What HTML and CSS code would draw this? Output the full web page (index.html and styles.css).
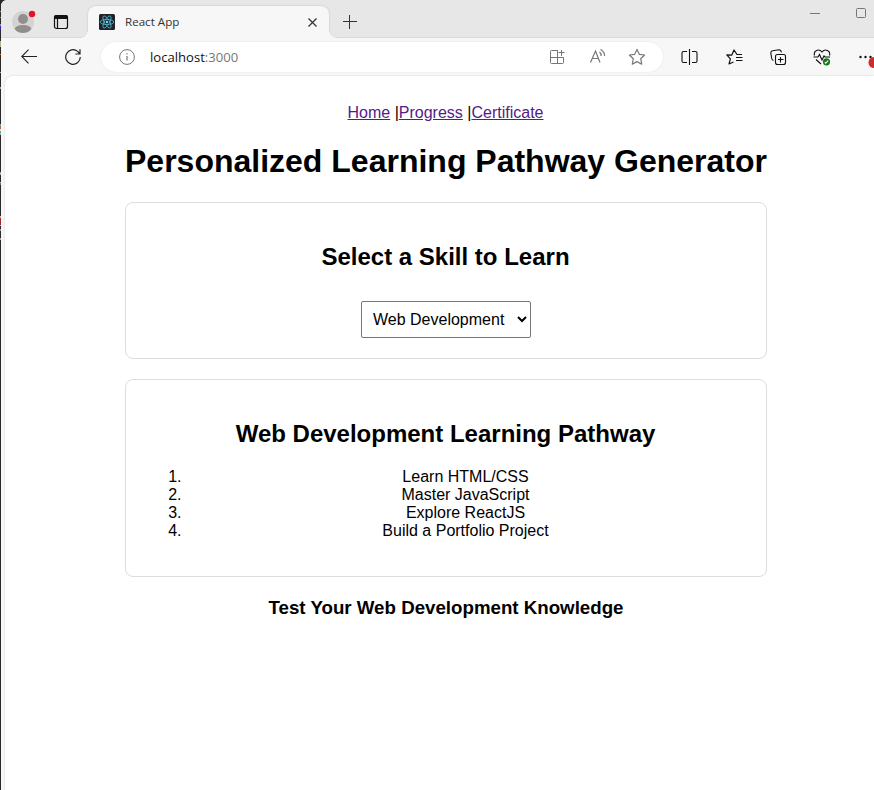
FILE: index.html
```html
<!DOCTYPE html>
<html lang="en">
<head>
<meta charset="utf-8">
<title>React App</title>
<link rel="stylesheet" href="styles.css">
</head>
<body>
<div class="window">
  <header class="tabs">
    <svg class="avatar" width="24" height="24" viewBox="0 0 24 24"><defs><clipPath id="face"><circle cx="11" cy="12" r="11"/></clipPath></defs><circle cx="11" cy="12" r="11" fill="#d5d3d1"/><g clip-path="url(#face)" fill="#918f8d"><circle cx="11" cy="9" r="5"/><ellipse cx="11" cy="19.500" rx="8.500" ry="4.500"/></g><circle cx="20" cy="4" r="3.2" fill="#e81123"/></svg>
    <svg class="tabmenu" width="16" height="16" viewBox="0 0 16 16"><rect x="1.5" y="1.5" width="13" height="13" rx="2" fill="none" stroke="#111" stroke-width="1.2"/><path d="M1 5V3a2 2 0 0 1 2-2h10a2 2 0 0 1 2 2v2z" fill="#111"/><path d="M4.5 5v9.5" stroke="#111" stroke-width="1.2"/></svg>
    <div class="tab">
      <svg class="favicon" width="16" height="16" viewBox="0 0 16 16"><rect width="16" height="16" rx="1.5" fill="#20232a"/><g fill="none" stroke="#53b9d3" stroke-width=".8"><ellipse cx="8" cy="8" rx="6.8" ry="2.6"/><ellipse cx="8" cy="8" rx="6.8" ry="2.6" transform="rotate(60 8 8)"/><ellipse cx="8" cy="8" rx="6.8" ry="2.6" transform="rotate(120 8 8)"/></g><circle cx="8" cy="8" r="1.3" fill="#61dafb"/></svg>
      <span class="tabname">React App</span>
      <svg class="close" width="9" height="9" viewBox="0 0 9 9" stroke="#333" stroke-width="1.2"><path d="M.5 .5l8 8M8.5 .5l-8 8"/></svg>
    </div>
    <svg class="newtab" width="14" height="14" viewBox="0 0 14 14" stroke="#333" stroke-width="1"><path d="M0 6.5h14M6.5 0v14"/></svg>
    <svg class="minimize" width="10" height="10" viewBox="0 0 10 10" stroke="#777"><path d="M0 5.5h10"/></svg>
    <svg class="maximize" width="10" height="10" viewBox="0 0 10 10" fill="none" stroke="#777"><rect x=".5" y=".5" width="9" height="9" rx="1"/></svg>
  </header>
  <div class="toolbar">
    <svg class="back" width="16" height="16" viewBox="0 0 16 16" fill="none" stroke="#222" stroke-width="1.1"><path d="M16 7.500H.8M7.500 .7L.8 7.500l6.700 6.800"/></svg>
    <svg class="reload" width="16" height="16" viewBox="0 0 16 16" fill="none" stroke="#222" stroke-width="1.2"><path d="M15.3 8A7.3 7.3 0 1 1 12.7 2.4L15 5M15 .3V5h-4.6"/></svg>
    <div class="address">
      <svg class="info" width="16" height="16" viewBox="0 0 16 16" fill="none" stroke="#777"><circle cx="8" cy="8" r="7.4"/><path d="M8 7v4.5M8 4.2v1.3" stroke-width="1.2"/></svg>
      <span class="url">localhost<span class="port">:3000</span></span>
      <svg width="16" height="16" viewBox="0 0 16 16" class="apps" fill="none" stroke="#777"><path d="M9 1.500H2.500a1 1 0 0 0-1 1v11a1 1 0 0 0 1 1h11a1 1 0 0 0 1-1V8.500H1.500M8.500 1v13.500M12.500 1v6M9.500 3.500h6"/></svg>
      <svg width="18" height="16" viewBox="0 0 18 16" class="read" fill="none" stroke="#777" stroke-width="1.200"><path d="M1.500 14.500L6.500 3l4.500 11.500M3 10.500h6.500M10.500 4q2 1.500 1.500 4M11.500 1.500q4.500 2.500 4 6.500"/></svg>
      <svg width="18" height="18" viewBox="0 0 18 18" class="star" fill="none" stroke="#777" stroke-width="1.200"><path d="M9 1.400l2.300 4.900 5.300.7-3.900 3.700 1 5.500L9 13.600l-4.700 2.600 1-5.500L1.400 7l5.300-.7z" stroke-linejoin="round"/></svg>
    </div>
    <svg class="split" width="17" height="16" viewBox="0 0 17 16" fill="none" stroke="#111" stroke-width="1.1"><path d="M6 2.500H2.500a1.500 1.500 0 0 0-1.500 1.500v8a1.500 1.500 0 0 0 1.500 1.500H6M11 2.500h3.500A1.500 1.500 0 0 1 16 4v8a1.500 1.500 0 0 1-1.500 1.500H11M8.500 0v16"/></svg>
    <svg class="favs" width="17" height="17" viewBox="0 0 17 17" fill="none" stroke="#111" stroke-width="1.200" stroke-linejoin="round"><path d="M16 5.500h-5L8 1 5.800 6.100.8 5.800l3.600 4-1.400 5.200 4.500-2M10 8.500h6.500M10 11.500h6.500"/></svg>
    <svg class="collect" width="17" height="17" viewBox="0 0 17 17" fill="none" stroke="#111" stroke-width="1.1"><rect x="5.500" y="5.500" width="10" height="10" rx="2"/><path d="M10.500 8v5.500M8 10.500h5.500M3.500 11.500Q2 11 1.700 9.500L.8 4Q.8 2 2.500 1.800L9 .8q2 0 2.400 2.500"/></svg>
    <svg class="health" width="18" height="18" viewBox="0 0 18 18" fill="none" stroke="#111" stroke-width="1.1"><path d="M1.500 6.500C0 1.500 6-.8 9 3c3-3.800 9-1.500 7.500 3.500M.5 8h4.500l1.500-2.500L9 11l2-4 1 1h5M3 10.500l5 4.500"/><circle cx="13.500" cy="12.800" r="3.600" fill="#107c10" stroke="none"/><path d="M11.800 13.200l1 1 2.400-2.600" stroke="#fff"/></svg>
    <svg class="more" width="15" height="18" viewBox="0 0 15 18"><g fill="#111"><circle cx="1.500" cy="6" r="1.200"/><circle cx="6.500" cy="6" r="1.200"/><circle cx="11.500" cy="6" r="1.200"/></g><circle cx="15" cy="11.500" r="5.500" fill="#d02b2b"/></svg>
  </div>
  <main class="page">
    <div class="app">
      <nav><a href="#">Home</a> |<a href="#">Progress</a> |<a href="#">Certificate</a></nav>
      <h1>Personalized Learning Pathway Generator</h1>
      <section class="card">
        <h2>Select a Skill to Learn</h2>
        <select><option>Web Development</option></select>
      </section>
      <section class="card">
        <h2>Web Development Learning Pathway</h2>
        <ol><li>Learn HTML/CSS</li><li>Master JavaScript</li><li>Explore ReactJS</li><li>Build a Portfolio Project</li></ol>
      </section>
      <h3>Test Your Web Development Knowledge</h3>
    </div>
  </main>
</div>
</body>
</html>
```
FILE: styles.css
```css
* { box-sizing: border-box; }
/* sliver of the editor behind the window's left edge */
body {
  margin: 0;
  overflow: hidden;
  background: linear-gradient(#2b2829 11px, #6c93a8 11px 12px, #2b2829 12px 17px, #b87a45 17px 18px, #2b2829 18px 24px, #8f8fa0 24px 26px, #3a20c0 26px 30px, #2b2829 30px 41px, #b5b08a 41px 47px, #2b2829 47px 54px, #c77b30 54px 55px, #2b2829 55px 72px, #aaa 72px 73px, #2b2829 73px 87px, #aaa 87px 89px, #2b2829 89px 124px, #7aa0c0 124px 126px, #b07030 126px 129px, #ddd 129px 131px, #4fa8dc 131px 133px, #c9a880 133px 135px, #2b2829 135px 172px, #d09a50 172px 173px, #8cc0e0 173px 175px, #2b2829 175px 182px, #8cc0e0 182px 183px, #a06040 183px 185px, #2b2829 185px 216px, #bbb 216px 218px, #a02830 218px 225px, #bbb 225px 226px, #2b2829 226px 229px, #999 229px 231px, #2b2829 231px 238px, #aaa 238px 240px, #2b2829 240px);
}
svg { display: block; flex: none; }
.window { margin-left: 1px; height: 790px; background: #f7f7f7; border-top-left-radius: 6px; overflow: hidden; }
.tabs { display: flex; height: 38px; background: #e7e7e7; border-bottom: 1px solid #dadada; }
.avatar { margin: 10px 0 0 11px; }
.tabmenu { margin: 14px 0 0 17px; }
.tab { position: relative; display: flex; width: 241px; height: 32px; margin: 6px 0 0 19px; background: #f7f7f7; border-radius: 8px 8px 0 0; box-shadow: 0 0 2px #bbb; clip-path: inset(-3px -8px 0 -8px); }
.tab::before, .tab::after { content: ""; position: absolute; bottom: 0; width: 8px; height: 8px; }
.tab::before { left: -8px; background: radial-gradient(circle at 0 0, #e7e7e7 7px, #d5d5d5 7.5px, #f7f7f7 8px); }
.tab::after { right: -8px; background: radial-gradient(circle at 100% 0, #e7e7e7 7px, #d5d5d5 7.5px, #f7f7f7 8px); }
.favicon { margin: 8px 0 0 11px; }
.tabname { margin: 7px 0 0 10px; font: 11.6px/18px "Open Sans", "Noto Sans", sans-serif; color: #333; white-space: nowrap; }
.close { margin: 12px 12px 0 auto; }
.newtab { margin: 15px 0 0 14px; }
.minimize { margin: 8px 0 0 auto; }
.maximize { margin: 8px 8px 0 36px; }
.toolbar { display: flex; height: 38px; }
.back { margin: 11px 0 0 20px; }
.reload { margin: 11px 0 0 28px; }
.address { display: flex; width: 562px; height: 30px; margin: 4px 0 0 20px; background: #fff; border-radius: 15px; box-shadow: 0 0 2px #e0e0e0; }
.info { margin: 7px 0 0 18px; }
.url { margin: 5px 0 0 15px; font: 13.1px/20px "Open Sans", "Noto Sans", sans-serif; color: #111; }
.port { color: #777; }
.apps { margin: 7px 0 0 auto; }
.read { margin: 6px 0 0 24px; }
.star { margin: 6px 17px 0 21px; }
.split { margin: 11px 0 0 18px; }
.favs { margin: 11px 0 0 28px; }
.collect { margin: 11px 0 0 27px; }
.health { margin: 11px 0 0 26px; }
.more { margin: 13px 0 0 auto; }
.page { height: 714px; margin-left: 4px; background: #fff; border-radius: 8px 0 0; box-shadow: 0 0 2px #ccc; font: 16px/18px "Liberation Sans", Arial, sans-serif; color: #000; text-align: center; overflow: hidden; }
.app { width: 641px; margin: 28px 0 0 120px; }
nav a { color: #551a8b; }
h1 { margin: 21px 0 22px; font-size: 32px; line-height: 37px; white-space: nowrap; }
.card { width: 642px; padding: 20px 21px 20px 20px; margin-bottom: 20px; border: 1px solid #ddd; border-radius: 8px; }
h2 { margin: 20px 0; font-size: 24px; line-height: 27px; }
select { display: block; width: 170px; height: 37px; margin: 31px auto 0; padding: 8px 8px 8px 7px; font: 16px "Liberation Sans", Arial, sans-serif; color: #000; background: #fff; border: 1px solid #767676; border-radius: 2px; position: relative; left: .5px; }
ol { margin: 21px 0 16px; padding-left: 40px; }
h3 { margin: 0 -1px 0 0; font-size: 18.72px; line-height: 21px; }
```
